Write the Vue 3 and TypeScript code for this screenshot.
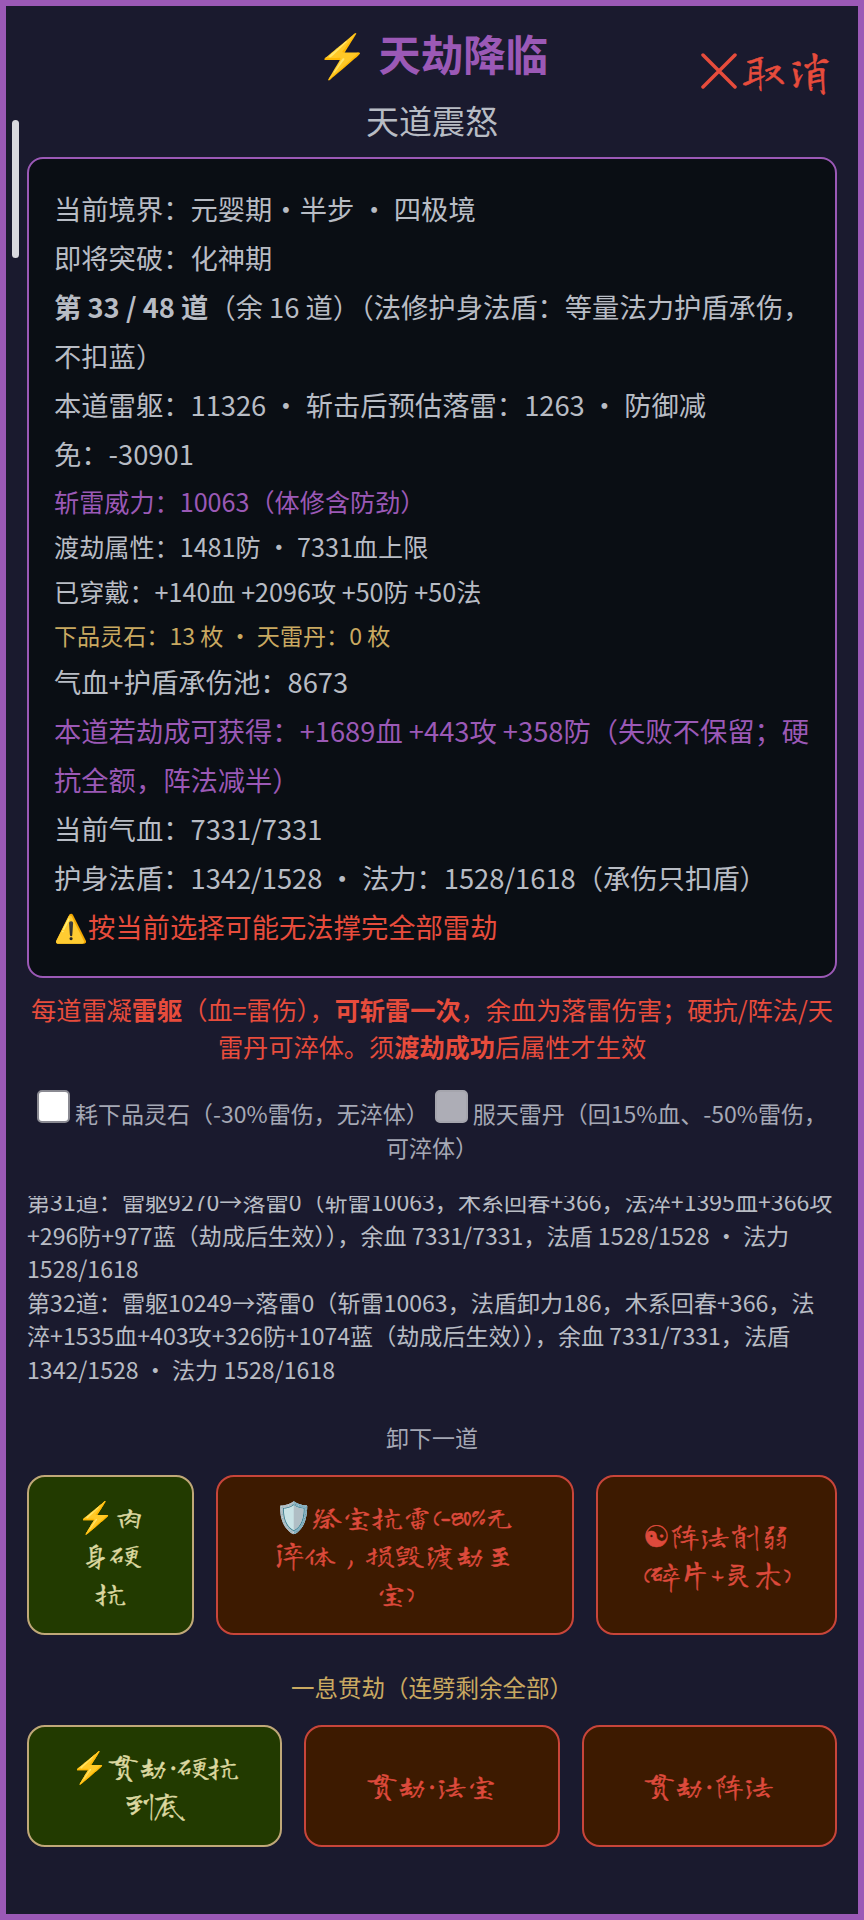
<script setup lang="ts">
interface Row { text?: string; bold?: string; cls?: string }
const rows: Row[] = [
  { text: '当前境界：元婴期·半步 · 四极境' },
  { text: '即将突破：化神期' },
  { bold: '第 33 / 48 道', text: '（余 16 道）（法修护身法盾：等量法力护盾承伤，不扣蓝）' },
  { text: '本道雷躯：11326 · 斩击后预估落雷：1263 · 防御减免：-30901' },
  { text: '斩雷威力：10063（体修含防劲）', cls: 'small purple' },
  { text: '渡劫属性：1481防 · 7331血上限', cls: 'small' },
  { text: '已穿戴：+140血 +2096攻 +50防 +50法', cls: 'small' },
  { text: '下品灵石：13 枚 · 天雷丹：0 枚', cls: 'tiny gold' },
  { text: '气血+护盾承伤池：8673' },
  { text: '本道若劫成可获得：+1689血 +443攻 +358防（失败不保留；硬抗全额，阵法减半）', cls: 'purple' },
  { text: '当前气血：7331/7331' },
  { text: '护身法盾：1342/1528 · 法力：1528/1618（承伤只扣盾）' },
  { text: '⚠️按当前选择可能无法撑完全部雷劫', cls: 'red' },
]
const logs: string[] = [
  '第31道：雷躯9270→落雷0（斩雷10063，木系回春+366，法淬+1395血+366攻+296防+977蓝（劫成后生效）），余血 7331/7331，法盾 1528/1528 · 法力 1528/1618',
  '第32道：雷躯10249→落雷0（斩雷10063，法盾卸力186，木系回春+366，法淬+1535血+403攻+326防+1074蓝（劫成后生效）），余血 7331/7331，法盾 1342/1528 · 法力 1528/1618',
]
</script>

<template>
  <main class="panel">
    <div class="thumb"></div>
    <button class="cancel" type="button">
      <svg class="x" viewBox="0 0 36 36" width="36" height="36" aria-hidden="true"><path d="M2 2 L34 34 M34 2 L2 34" /></svg>取消
    </button>
    <h1 class="title">⚡ 天劫降临</h1>
    <p class="subtitle">天道震怒</p>
    <section class="status">
      <p v-for="(r, i) in rows" :key="i" class="row" :class="r.cls">
        <strong v-if="r.bold">{{ r.bold }}</strong>{{ r.text }}
      </p>
    </section>
    <p class="note">每道雷凝<strong>雷躯</strong>（血=雷伤），<strong>可斩雷一次</strong>，余血为落雷伤害；硬抗/阵法/天雷丹可淬体。须<strong>渡劫成功</strong>后属性才生效</p>
    <div class="options">
      <label><input class="check" type="checkbox" />耗下品灵石（-30%雷伤，无淬体）</label>
      <label> <input class="check off" type="checkbox" disabled />服天雷丹（回15%血、-50%雷伤，可淬体）</label>
    </div>
    <div class="log">
      <p v-for="(l, i) in logs" :key="i">{{ l }}</p>
    </div>
    <p class="label">卸下一道</p>
    <div class="btns one">
      <button class="btn go" type="button">⚡肉身硬抗</button>
      <button class="btn risk wide" type="button">🛡️祭宝抗雷(-80%无淬体，损毁渡劫至宝)</button>
      <button class="btn risk" type="button">☯阵法削弱(碎片+灵木)</button>
    </div>
    <p class="label gold-label">一息贯劫（连劈剩余全部）</p>
    <div class="btns all">
      <button class="btn go" type="button">⚡贯劫·硬抗到底</button>
      <button class="btn risk" type="button">贯劫·法宝</button>
      <button class="btn risk" type="button">贯劫·阵法</button>
    </div>
  </main>
</template>

<style>
html, body { margin: 0; background: #1a1a2e; }
</style>

<style scoped>
.panel {
  position: relative;
  box-sizing: border-box;
  width: 864px;
  height: 1920px;
  overflow: hidden;
  padding: 18px 21px 0;
  border: 6px solid #9b59b6;
  background: #1a1a2e;
  color: #b8bcc4;
  font-family: "Noto Sans CJK SC", "Noto Sans", sans-serif;
}
p, h1 { margin: 0; }
.thumb {
  position: absolute;
  left: 6px;
  top: 114px;
  width: 7px;
  height: 138px;
  border-radius: 4px;
  background: #d9d9de;
}
.cancel {
  position: absolute;
  right: 24px;
  top: 37px;
  display: flex;
  align-items: center;
  gap: 3px;
  padding: 0;
  border: 0;
  background: transparent;
  color: #e74c3c;
  font-family: "Long Cang", cursive;
  font-size: 47px;
  line-height: 56px;
  -webkit-text-stroke: 0.5px currentColor;
}
.x { fill: none; stroke: #e74c3c; stroke-width: 3.5; stroke-linecap: round; }
.title {
  color: #9b59b6;
  font-size: 42.4px;
  font-weight: 700;
  line-height: 58px;
  text-align: center;
}
.subtitle {
  margin-top: 14px;
  font-size: 33px;
  line-height: 48px;
  text-align: center;
}
.status {
  box-sizing: border-box;
  margin-top: 13px;
  height: 821px;
  padding: 25px 12px 25px 25px;
  border: 2px solid #9b59b6;
  border-radius: 16px;
  background: #0a0e14;
}
.row { font-size: 27.3px; line-height: 49.1px; }
.row.small { font-size: 25.15px; line-height: 45.3px; }
.row.tiny { font-size: 23.1px; line-height: 42.3px; }
.purple { color: #9b59b6; }
.gold { color: #c9a961; }
.red { color: #e74c3c; }
.note {
  margin-top: 13px;
  color: #e74c3c;
  font-size: 25.2px;
  line-height: 37px;
  text-align: center;
}
.options {
  margin-top: 25px;
  color: #a5a8b5;
  font-size: 23px;
  line-height: 34px;
  text-align: center;
}
.check {
  appearance: none;
  box-sizing: border-box;
  width: 33px;
  height: 33px;
  margin: 0 5px 0 0;
  border: 2px solid #8a8a92;
  border-radius: 5px;
  background: #fff;
}
.check.off { margin-left: 6px; border-color: #a5a5ad; background: #adadb6; }
.log {
  display: flex;
  flex-direction: column;
  justify-content: flex-end;
  margin-top: 32px;
  height: 190px;
  padding-right: 2px;
  overflow: hidden;
  font-size: 23.1px;
  line-height: 33.5px;
}
.label {
  margin-top: 33.5px;
  color: #a5a8b5;
  font-size: 23px;
  line-height: 34px;
  text-align: center;
}
.gold-label { color: #c9a961; margin-top: 35px; font-size: 23.5px; }
.btns { display: grid; gap: 22px; margin-top: 21px; }
.one { grid-template-columns: 167px 358px 1fr; }
.all { grid-template-columns: repeat(3, 1fr); }
.one .btn { height: 160px; }
.all .btn { height: 122px; }
.btn {
  box-sizing: border-box;
  padding: 0 40px;
  border: 2px solid;
  border-radius: 18px;
  font-family: "Long Cang", cursive;
  font-size: 30px;
  line-height: 38px;
  -webkit-text-stroke: 0.4px currentColor;
}
.btn.wide { padding: 0 50px; }
.go { border-color: #c0a878; background: #223a00; color: #dcd8a0; }
.risk { border-color: #c8453a; background: #3d1a00; color: #dd4a3c; }
</style>
